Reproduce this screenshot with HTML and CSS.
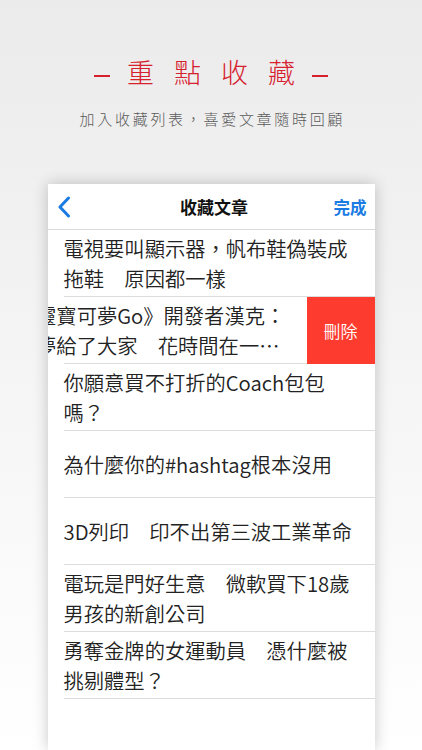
FILE: index.html
```html
<!DOCTYPE html>
<html lang="zh-Hant">
<head>
<meta charset="utf-8">
<title>重點收藏</title>
<link rel="stylesheet" href="styles.css">
</head>
<body>
<div class="page">
  <div class="hero">
    <h1 class="title">
      <span class="dash"></span>
      <span class="ch">重</span><span class="ch">點</span><span class="ch">收</span><span class="ch">藏</span>
      <span class="dash"></span>
    </h1>
    <p class="subtitle">加入收藏列表，喜愛文章隨時回顧</p>
  </div>
  <div class="card">
    <div class="navbar">
      <svg class="back" width="14" height="22" viewBox="0 0 14 22"><path d="M11.5 2 L3 11 L11.5 20" fill="none" stroke="#1a7be3" stroke-width="3" stroke-linecap="round" stroke-linejoin="round"/></svg>
      <div class="nav-title">收藏文章</div>
      <div class="done">完成</div>
    </div>
    <ul class="list">
      <li class="row"><div class="cell"><p class="text">電視要叫顯示器，帆布鞋偽裝成<br>拖鞋　原因都一樣</p></div></li>
      <li class="row swiped"><div class="cell"><p class="text shifted">《精靈寶可夢Go》開發者漢克：<br>把美夢給了大家　花時間在一…</p></div><div class="delete">刪除</div></li>
      <li class="row"><div class="cell"><p class="text">你願意買不打折的Coach包包<br>嗎？</p></div></li>
      <li class="row"><div class="cell"><p class="text">為什麼你的#hashtag根本沒用</p></div></li>
      <li class="row"><div class="cell"><p class="text">3D列印　印不出第三波工業革命</p></div></li>
      <li class="row"><div class="cell"><p class="text">電玩是門好生意　微軟買下18歲<br>男孩的新創公司</p></div></li>
      <li class="row"><div class="cell"><p class="text">勇奪金牌的女運動員　憑什麼被<br>挑剔體型？</p></div></li>
    </ul>
  </div>
</div>
</body>
</html>
```
FILE: styles.css
```css
html, body {
  margin: 0;
  padding: 0;
}
body {
  font-family: "Noto Sans CJK TC", "Noto Sans", sans-serif;
  background: #fff;
}
.page {
  width: 422px;
  height: 750px;
  overflow: hidden;
  display: flex;
  flex-direction: column;
  align-items: center;
  background: linear-gradient(to bottom, #ebebeb 0%, #f4f4f4 45%, #ffffff 100%);
}
.hero {
  display: flex;
  flex-direction: column;
  align-items: center;
  padding-top: 51px;
}
.title {
  margin: 0;
  display: flex;
  align-items: center;
  height: 42px;
  font-size: 27px;
  font-weight: 200;
  color: #d6202e;
  line-height: 42px;
}
.title .ch {
  margin: 0 10px;
}
.title .dash {
  width: 16px;
  height: 2px;
  background: #d6202e;
  margin: 8px 7px 0;
}
.subtitle {
  margin: 16px 0 0;
  font-size: 15px;
  line-height: 20px;
  letter-spacing: 2.7px;
  padding-left: 2.7px;
  color: #5a5a5a;
  font-weight: 300;
}
.card {
  margin-top: 55px;
  width: 327px;
  flex: 1;
  background: #fff;
  box-shadow: 0 0 14px rgba(0, 0, 0, 0.22);
  overflow: hidden;
}
.navbar {
  height: 45px;
  border-bottom: 1px solid #d9d9d9;
  display: flex;
  align-items: center;
  justify-content: space-between;
  padding: 0 8px 0 9px;
}
.back {
  display: block;
  width: 14px;
  height: 22px;
}
.nav-title {
  font-size: 17px;
  font-weight: 700;
  color: #111;
  margin-left: 24px;
}
.done {
  font-size: 16.5px;
  font-weight: 700;
  color: #1a7be3;
}
.list {
  list-style: none;
  margin: 0;
  padding: 0;
}
.row {
  display: flex;
  align-items: flex-start;
  padding-left: 16px;
  height: 67px;
}
.cell {
  flex: 1;
  height: 66px;
  border-bottom: 1px solid #dcdcdc;
  display: flex;
  align-items: center;
  min-width: 0;
}
.text {
  margin: 0;
  font-size: 20.3px;
  line-height: 30px;
  color: #222;
  white-space: nowrap;
  font-weight: 350;
}
.text.shifted {
  margin-left: -68px;
}
.delete {
  width: 68px;
  height: 67px;
  background: #fe3b2f;
  color: #fff;
  font-size: 17px;
  font-weight: 350;
  display: flex;
  align-items: center;
  justify-content: center;
  flex-shrink: 0;
}
```
